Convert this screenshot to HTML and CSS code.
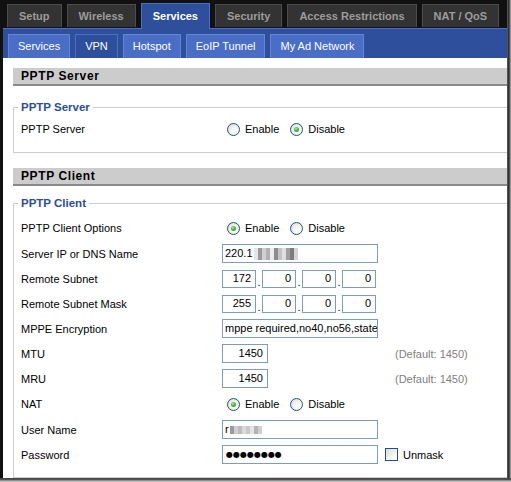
FILE: index.html
```html
<!DOCTYPE html>
<html>
<head>
<meta charset="utf-8">
<title>VPN</title>
<link rel="stylesheet" href="styles.css">
</head>
<body>
<div class="screen">
  <div class="main">
    <nav class="topnav">
      <span class="tab">Setup</span>
      <span class="tab">Wireless</span>
      <span class="tab active">Services</span>
      <span class="tab">Security</span>
      <span class="tab">Access Restrictions</span>
      <span class="tab">NAT / QoS</span>
    </nav>
    <nav class="subnav">
      <span class="subtab">Services</span>
      <span class="subtab active">VPN</span>
      <span class="subtab">Hotspot</span>
      <span class="subtab">EoIP Tunnel</span>
      <span class="subtab">My Ad Network</span>
    </nav>
    <div class="content">
      <h2 class="section-head first">PPTP Server</h2>
      <fieldset class="group server">
        <legend>PPTP Server</legend>
        <div class="row radio-row">
          <span class="label">PPTP Server</span>
          <span class="value">
            <span class="radio"></span><span class="opt">Enable</span>
            <span class="radio on"></span><span class="opt">Disable</span>
          </span>
        </div>
      </fieldset>

      <h2 class="section-head">PPTP Client</h2>
      <fieldset class="group client">
        <legend>PPTP Client</legend>
        <div class="row radio-row">
          <span class="label">PPTP Client Options</span>
          <span class="value">
            <span class="radio on"></span><span class="opt">Enable</span>
            <span class="radio"></span><span class="opt">Disable</span>
          </span>
        </div>
        <div class="row">
          <span class="label">Server IP or DNS Name</span>
          <span class="value"><span class="field wide">220.1<span class="blur ip"></span></span></span>
        </div>
        <div class="row">
          <span class="label">Remote Subnet</span>
          <span class="value">
            <span class="field oct">172</span><span class="dot">.</span><span class="field oct">0</span><span class="dot">.</span><span class="field oct">0</span><span class="dot">.</span><span class="field oct">0</span>
          </span>
        </div>
        <div class="row">
          <span class="label">Remote Subnet Mask</span>
          <span class="value">
            <span class="field oct">255</span><span class="dot">.</span><span class="field oct">0</span><span class="dot">.</span><span class="field oct">0</span><span class="dot">.</span><span class="field oct">0</span>
          </span>
        </div>
        <div class="row">
          <span class="label">MPPE Encryption</span>
          <span class="value"><span class="field wide clip">mppe required,no40,no56,stateless</span></span>
        </div>
        <div class="row">
          <span class="label">MTU</span>
          <span class="value"><span class="field num">1450</span><span class="default">(Default: 1450)</span></span>
        </div>
        <div class="row">
          <span class="label">MRU</span>
          <span class="value"><span class="field num">1450</span><span class="default">(Default: 1450)</span></span>
        </div>
        <div class="row radio-row">
          <span class="label">NAT</span>
          <span class="value">
            <span class="radio on"></span><span class="opt">Enable</span>
            <span class="radio"></span><span class="opt">Disable</span>
          </span>
        </div>
        <div class="row">
          <span class="label">User Name</span>
          <span class="value"><span class="field wide">r<span class="blur user"></span></span></span>
        </div>
        <div class="row">
          <span class="label">Password</span>
          <span class="value"><span class="field wide pass">●●●●●●●●</span><span class="check"></span><span class="opt">Unmask</span></span>
        </div>
      </fieldset>
    </div>
  </div>
  <div class="edge-r"></div>
  <div class="edge-b"></div>
</div>
</body>
</html>
```
FILE: styles.css
```css
html, body {
  margin: 0;
  padding: 0;
  background: #fff;
}
.screen {
  width: 511px;
  height: 482px;
  display: grid;
  grid-template-columns: 507px 4px;
  grid-template-rows: 478px 4px;
  overflow: hidden;
  font-family: "Liberation Sans", Arial, sans-serif;
  font-size: 11px;
  color: #000;
  background: #111;
}
.main {
  background: #111;
  overflow: hidden;
  display: flex;
  flex-direction: column;
}
.edge-r {
  background: linear-gradient(90deg, #6a6a6a 0, #3a3a3a 1px, #2a2a2a 2px, #7a7a7a 3px, #b0b0b0 4px);
}
.edge-b {
  grid-column: 1 / 3;
  background: linear-gradient(180deg, #5a5a5a 0, #333 1px, #6e6e6e 2px, #a8a8a8 3px, #d6d6d6 4px);
}

/* top tabs */
.topnav {
  height: 28px;
  box-sizing: border-box;
  padding: 4px 0 0 7px;
  display: flex;
  align-items: flex-start;
  gap: 5px;
  flex: none;
}
.tab {
  height: 23px;
  box-sizing: border-box;
  padding: 0 11px;
  border: 1px solid #4c4c4c;
  border-bottom: none;
  background: #333;
  color: #9c9c9c;
  font-weight: bold;
  line-height: 22px;
  white-space: nowrap;
}
.tab.active {
  position: relative;
  z-index: 1;
  height: 26px;
  margin-top: -1px;
  background: #2e4f9b;
  border-color: #4b6fc4;
  color: #fff;
  line-height: 24px;
}

/* sub tabs */
.subnav {
  margin-left: 3px;
  height: 30px;
  box-sizing: border-box;
  border-top: 1px solid #4b6fc4;
  background: #2e4f9b;
  padding: 5px 0 0 5px;
  display: flex;
  gap: 5px;
  flex: none;
}
.subtab {
  height: 24px;
  box-sizing: border-box;
  padding: 0 9px;
  border: 1px solid #6585d2;
  border-bottom: none;
  background: #4a6ec6;
  color: #fff;
  line-height: 22px;
  white-space: nowrap;
}
.subtab.active {
  background: #2e4f9b;
  border-color: #4d6fbf;
}

/* content */
.content {
  margin-left: 3px;
  flex: 1;
  background: #fff;
  padding-left: 10px;
  overflow: hidden;
}
.section-head {
  margin: 15px 0 0;
  height: 16px;
  border-bottom: 2px solid #8a8a8a;
  background: #ccc;
  padding-left: 8px;
  font-size: 12px;
  font-weight: bold;
  letter-spacing: 0.6px;
  line-height: 17px;
}
.section-head.first {
  margin-top: 10px;
}
.group {
  margin: 10px -20px 0 0;
  padding: 5px 0 10px 4px;
  border: 1px solid #ccc;
  min-width: 0;
}
.group.server {
  margin-top: 14px;
  padding-top: 2px;
}
.group legend {
  padding: 0 3px;
  color: #2b4d9b;
  font-size: 11.5px;
  font-weight: bold;
  line-height: 14px;
}
.row {
  height: 25px;
  display: flex;
  align-items: center;
  padding-left: 3px;
}
.row.radio-row {
  height: 26px;
}
.label {
  width: 201px;
  flex: none;
}
.value {
  display: flex;
  align-items: center;
}
.radio {
  width: 13px;
  height: 13px;
  box-sizing: border-box;
  border-radius: 50%;
  border: 1px solid #1d5281;
  background: radial-gradient(circle at 65% 65%, #ffffff 0, #f4f4ef 40%, #d6d6ce 100%);
  margin: 0 5px 0 5px;
  display: flex;
  align-items: center;
  justify-content: center;
}
.opt + .radio {
  margin-left: 11px;
}
.radio.on::after {
  content: "";
  width: 5px;
  height: 5px;
  border-radius: 50%;
  background: radial-gradient(circle at 40% 35%, #a8eca0 0, #3dbb3a 45%, #21941f 100%);
}
.field {
  height: 19px;
  box-sizing: border-box;
  border: 1px solid #7f9db9;
  background: #fff;
  padding: 0 2px;
  line-height: 17px;
  white-space: nowrap;
  overflow: hidden;
  display: flex;
  align-items: center;
}
.field.wide {
  width: 156px;
}
.field.clip {
  display: block;
}
.field.oct {
  width: 34px;
  justify-content: flex-end;
  padding-right: 4px;
  height: 18px;
}
.field.num {
  width: 46px;
  justify-content: flex-end;
  padding-right: 4px;
}
.dot {
  width: 6px;
  text-align: center;
  align-self: flex-end;
  line-height: 12px;
}
.default {
  margin-left: 127px;
  color: #808080;
}
.blur {
  display: inline-block;
  height: 12px;
}
.blur.ip {
  width: 44px;
  margin-left: 1px;
  background:
    linear-gradient(90deg, #e6e6e6 0 4px, #9a9a9a 4px 8px, #cfcfcf 8px 12px, #b0b0b0 12px 16px, #ececec 16px 20px, #8c8c8c 20px 24px, #c4c4c4 24px 28px, #e0e0e0 28px 32px, #9f9f9f 32px 36px, #7c7c7c 36px 40px, #d4d4d4 40px 44px);
}
.blur.user {
  width: 32px;
  margin-left: 1px;
  height: 8px;
  background:
    linear-gradient(90deg, #9a9a9a 0 4px, #cfcfcf 4px 8px, #bcbcbc 8px 12px, #dadada 12px 16px, #c8c8c8 16px 20px, #e4e4e4 20px 24px, #b4b4b4 24px 28px, #d0d0d0 28px 32px);
}
.field.pass {
  font-family: "DejaVu Sans", sans-serif;
  font-size: 8px;
  letter-spacing: 0;
  padding-left: 3px;
}
.check {
  width: 13px;
  height: 13px;
  box-sizing: border-box;
  border: 1px solid #1d5281;
  background: linear-gradient(135deg, #dcdcd7 0, #f3f3ef 60%, #ffffff 100%);
  margin: 0 5px 0 7px;
}
```
